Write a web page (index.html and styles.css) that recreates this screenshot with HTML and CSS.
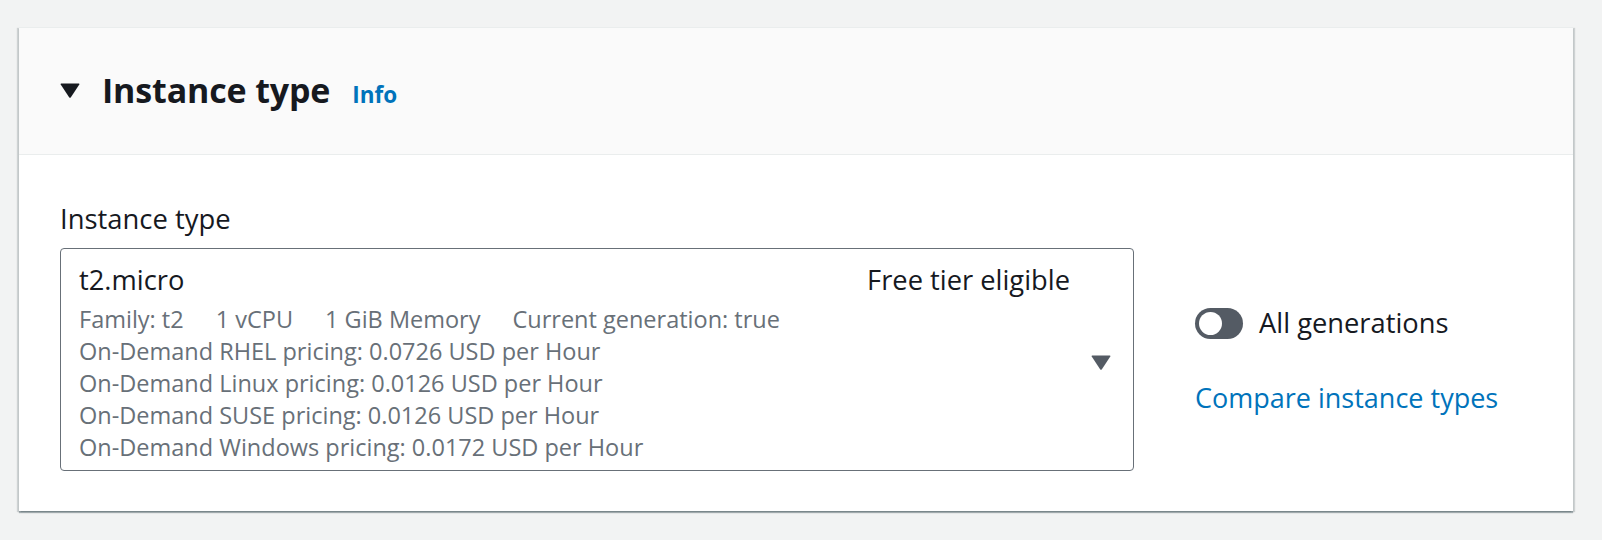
FILE: index.html
```html
<!DOCTYPE html>
<html lang="en">
<head>
<meta charset="utf-8">
<title>Instance type</title>
<link rel="stylesheet" href="styles.css">
</head>
<body>
<section class="card">
  <header class="card-header">
    <svg class="expand-icon" width="20" height="16" viewBox="0 0 20 16" aria-hidden="true">
      <path d="M1.2 1.5 L18.8 1.5 Q20 1.5 19.3 2.6 L10.9 15.2 Q10 16.4 9.1 15.2 L0.7 2.6 Q0 1.5 1.2 1.5 Z" fill="#16191f"/>
    </svg>
    <h2 class="title">Instance type</h2>
    <a class="info-link" href="#">Info</a>
  </header>
  <div class="card-body">
    <div class="field">
      <div class="field-label">Instance type</div>
      <div class="select">
        <div class="option">
          <div class="option-top">
            <span class="option-name">t2.micro</span>
            <span class="option-tag">Free tier eligible</span>
          </div>
          <div class="option-tags">
            <span>Family: t2</span>
            <span>1 vCPU</span>
            <span>1 GiB Memory</span>
            <span>Current generation: true</span>
          </div>
          <div class="option-desc">On-Demand RHEL pricing: 0.0726 USD per Hour</div>
          <div class="option-desc">On-Demand Linux pricing: 0.0126 USD per Hour</div>
          <div class="option-desc">On-Demand SUSE pricing: 0.0126 USD per Hour</div>
          <div class="option-desc">On-Demand Windows pricing: 0.0172 USD per Hour</div>
        </div>
        <svg class="caret" width="20" height="16" viewBox="0 0 20 16" aria-hidden="true">
          <path d="M1.2 1.5 L18.8 1.5 Q20 1.5 19.3 2.6 L10.9 15.2 Q10 16.4 9.1 15.2 L0.7 2.6 Q0 1.5 1.2 1.5 Z" fill="#545b64"/>
        </svg>
      </div>
    </div>
    <div class="side">
      <div class="toggle-row">
        <span class="toggle"><span class="knob"></span></span>
        <span class="toggle-label">All generations</span>
      </div>
      <a class="compare-link" href="#">Compare instance types</a>
    </div>
  </div>
</section>
</body>
</html>
```
FILE: styles.css
```css
* {
  box-sizing: border-box;
}

html, body {
  margin: 0;
  padding: 0;
}

body {
  background: #f2f3f3;
  font-family: "Open Sans", "Noto Sans", Arial, sans-serif;
  color: #16191f;
  height: 540px;
  overflow: hidden;
}

.card {
  margin: 27px 0 0 19px;
  width: 1554px;
  background: #ffffff;
  border-top: 1px solid #eaeded;
  box-shadow: 0 2px 1px 0 rgba(0, 28, 36, 0.3),
              2px 1px 1px 0 rgba(0, 28, 36, 0.15),
              -2px 1px 1px 0 rgba(0, 28, 36, 0.15);
}

.card-header {
  display: flex;
  align-items: baseline;
  background: #fafafa;
  border-bottom: 1px solid #eaeded;
  padding: 42px 0 44px 41px;
  height: 127px;
}

.expand-icon {
  align-self: center;
  flex: none;
  margin-right: 22px;
}

.title {
  margin: 0;
  font-size: 34px;
  line-height: 40px;
  font-weight: 700;
  color: #16191f;
  letter-spacing: -0.15px;
}

.info-link {
  margin-left: 22px;
  font-size: 22.5px;
  line-height: 40px;
  font-weight: 700;
  color: #0073bb;
  text-decoration: none;
}

.card-body {
  display: flex;
  align-items: flex-start;
  padding: 45px 0 40px 41px;
}

.field {
  width: 1074px;
  flex: none;
}

.field-label {
  font-size: 27.4px;
  line-height: 38px;
  color: #16191f;
  margin-bottom: 10px;
}

.select {
  display: flex;
  align-items: center;
  border: 1px solid #687078;
  border-radius: 4px;
  padding: 12px 22px 7px 18px;
}

.option {
  flex: 1;
  min-width: 0;
}

.option-top {
  display: flex;
  justify-content: space-between;
  font-size: 27.3px;
  line-height: 38px;
  color: #16191f;
  margin-bottom: 4px;
}

.option-tags {
  display: flex;
  gap: 32px;
  font-size: 23.5px;
  line-height: 32px;
  color: #687078;
}

.option-desc {
  font-size: 23.5px;
  line-height: 32px;
  color: #687078;
}

.caret {
  flex: none;
  margin-left: 21px;
}

.side {
  margin-left: 61px;
  margin-top: 104px;
  display: flex;
  flex-direction: column;
  gap: 37px;
}

.toggle-row {
  display: flex;
  align-items: center;
  gap: 16px;
  font-size: 27.3px;
  line-height: 38px;
}

.toggle {
  position: relative;
  display: block;
  width: 48px;
  height: 31px;
  border-radius: 16px;
  background: #545b64;
}

.knob {
  position: absolute;
  left: 4px;
  top: 4px;
  width: 23px;
  height: 23px;
  border-radius: 50%;
  background: #ffffff;
}

.toggle-label {
  color: #16191f;
}

.compare-link {
  font-size: 27px;
  line-height: 38px;
  color: #0073bb;
  text-decoration: none;
}
```
